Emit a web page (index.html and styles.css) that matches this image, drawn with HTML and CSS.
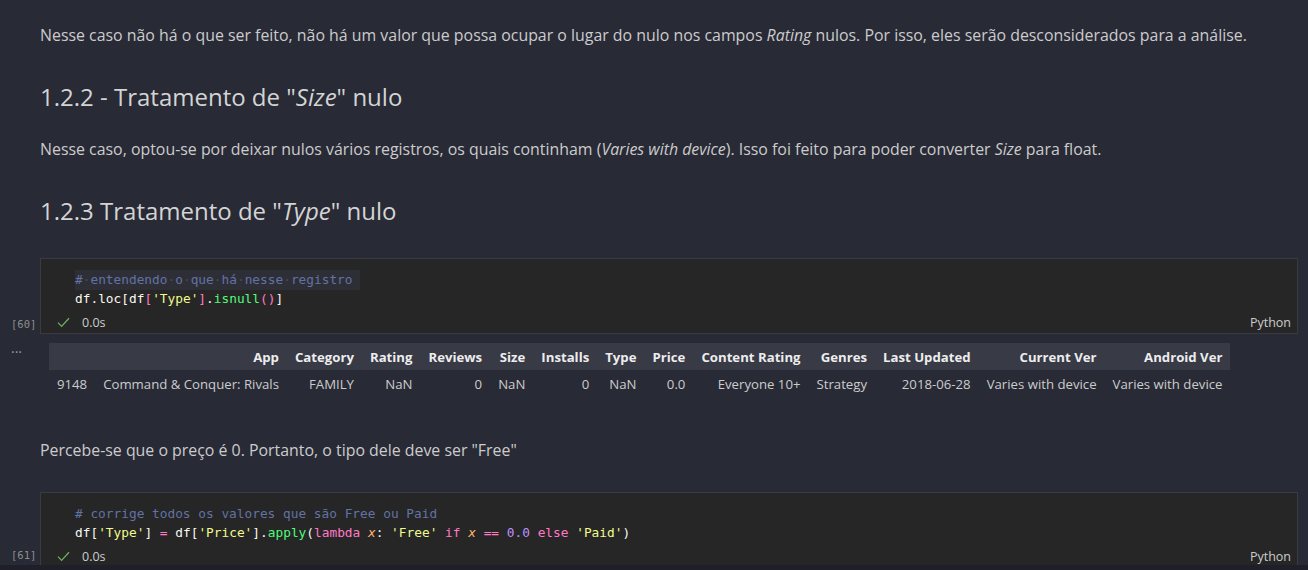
FILE: index.html
```html
<!DOCTYPE html>
<html lang="pt">
<head>
<meta charset="utf-8">
<title>Notebook</title>
<link rel="stylesheet" href="styles.css">
</head>
<body>
<div class="nb">
  <section class="md md-first">
    <p>Nesse caso não há o que ser feito, não há um valor que possa ocupar o lugar do nulo nos campos <em>Rating</em> nulos. Por isso, eles serão desconsiderados para a análise.</p>
  </section>
  <section class="md md-h2">
    <h2>1.2.2 - Tratamento de "<em>Size</em>" nulo</h2>
  </section>
  <section class="md md-p">
    <p>Nesse caso, optou-se por deixar nulos vários registros, os quais continham (<em>Varies with device</em>). Isso foi feito para poder converter <em>Size</em> para float.</p>
  </section>
  <section class="md md-h3">
    <h2>1.2.3 Tratamento de "<em>Type</em>" nulo</h2>
  </section>

  <section class="cell cell-1">
    <div class="cell-row">
      <div class="gutter"><span class="exec">[60]</span></div>
      <div class="cell-box">
        <pre class="code"><span class="line"><span class="hl"><span class="cm">#<span class="ws">·</span>entendendo<span class="ws">·</span>o<span class="ws">·</span>que<span class="ws">·</span>há<span class="ws">·</span>nesse<span class="ws">·</span>registro</span> </span></span>
<span class="line"><span class="id">df</span>.<span class="id">loc</span><span class="b1">[</span><span class="id">df</span><span class="b2">[</span><span class="str">'Type'</span><span class="b2">]</span>.<span class="fn">isnull</span><span class="b2">()</span><span class="b1">]</span></span></pre>
        <div class="status">
          <svg class="check" width="13" height="11" viewBox="0 0 13 11"><path d="M1 5.6 L4.6 9.4 L12 1.2" fill="none" stroke="#6fae5f" stroke-width="1.3"/></svg>
          <span class="time">0.0s</span>
          <span class="lang">Python</span>
        </div>
      </div>
    </div>
    <div class="out-row">
      <div class="gutter out-gutter"><span class="dots">···</span></div>
      <div class="output">
        <table class="df">
          <thead>
            <tr><th></th><th>App</th><th>Category</th><th>Rating</th><th>Reviews</th><th>Size</th><th>Installs</th><th>Type</th><th>Price</th><th>Content Rating</th><th>Genres</th><th>Last Updated</th><th>Current Ver</th><th>Android Ver</th></tr>
          </thead>
          <tbody>
            <tr><td>9148</td><td>Command &amp; Conquer: Rivals</td><td>FAMILY</td><td>NaN</td><td>0</td><td>NaN</td><td>0</td><td>NaN</td><td>0.0</td><td>Everyone 10+</td><td>Strategy</td><td>2018-06-28</td><td>Varies with device</td><td>Varies with device</td></tr>
          </tbody>
        </table>
      </div>
    </div>
  </section>

  <section class="md md-p2">
    <p>Percebe-se que o preço é 0. Portanto, o tipo dele deve ser "Free"</p>
  </section>

  <section class="cell cell-2">
    <div class="cell-row">
      <div class="gutter"><span class="exec">[61]</span></div>
      <div class="cell-box cell-box-open">
        <pre class="code"><span class="line"><span class="cm"># corrige todos os valores que são Free ou Paid</span></span>
<span class="line"><span class="id">df</span><span class="b1">[</span><span class="str">'Type'</span><span class="b1">]</span> <span class="kw">=</span> <span class="id">df</span><span class="b1">[</span><span class="str">'Price'</span><span class="b1">]</span>.<span class="fn">apply</span><span class="b1">(</span><span class="kw">lambda</span> <span class="param">x</span>: <span class="str">'Free'</span> <span class="kw">if</span> <span class="param">x</span> <span class="kw">==</span> <span class="num">0.0</span> <span class="kw">else</span> <span class="str">'Paid'</span><span class="b1">)</span></span></pre>
        <div class="status">
          <svg class="check" width="13" height="11" viewBox="0 0 13 11"><path d="M1 5.6 L4.6 9.4 L12 1.2" fill="none" stroke="#6fae5f" stroke-width="1.3"/></svg>
          <span class="time">0.0s</span>
          <span class="lang">Python</span>
        </div>
      </div>
    </div>
  </section>
  <div class="bottom-band"></div>
</div>
</body>
</html>
```

FILE: styles.css
```css
html, body {
  margin: 0;
  padding: 0;
}

body {
  background: #282a36;
  color: #cccccc;
  font-family: "Open Sans", "Noto Sans", "Liberation Sans", sans-serif;
  overflow: hidden;
  height: 570px;
}

.nb {
  display: flex;
  flex-direction: column;
}

/* ---------- markdown cells ---------- */
.md {
  padding-left: 40px;
  padding-right: 10px;
}

.md p {
  margin: 0;
  font-size: 15.9px;
  line-height: 22px;
}

.md h2 {
  margin: 0;
  font-size: 24px;
  line-height: 32px;
  font-weight: 400;
  color: #d4d4d4;
}

.md em {
  font-style: italic;
}

.md-first { margin-top: 24px; }
.md-h2 { margin-top: 35px; }
.md-p { margin-top: 25px; }
.md-h3 { margin-top: 35px; }
.md-p2 { margin-top: 41px; }

/* ---------- code cells ---------- */
.cell-1 { margin-top: 31px; }
.cell-2 { margin-top: 31px; }

.cell-row {
  display: flex;
}

.gutter {
  width: 40px;
  flex: none;
  position: relative;
}

.exec {
  position: absolute;
  left: 11px;
  bottom: 4px;
  font-family: "DejaVu Sans Mono", "Liberation Mono", monospace;
  font-size: 10.5px;
  color: #8e8e8e;
}

.cell-box {
  flex: 1;
  margin-right: 10px;
  background: #262626;
  border: 1px solid #393a44;
  display: flex;
  flex-direction: column;
}

.cell-box-open {
  border-bottom: none;
}

.code {
  margin: 0;
  padding: 11px 0 0 34px;
  font-family: "DejaVu Sans Mono", "Liberation Mono", monospace;
  font-size: 12.8px;
  line-height: 19px;
  color: #f8f8f2;
  white-space: pre;
}

.line {
  display: inline-block;
  height: 19px;
}

.hl {
  background: #2e2f36;
  display: inline-block;
  height: 20px;
}

.cm { color: #6272a4; }
.ws { color: #484b58; }
.id { color: #f8f8f2; }
.str { color: #f1fa8c; }
.fn { color: #50fa7b; }
.kw { color: #ff79c6; }
.num { color: #bd93f9; }
.param { color: #ffb86c; font-style: italic; }
.b1 { color: #f8f8f2; }
.b2 { color: #ff79c6; }

.status {
  display: flex;
  align-items: center;
  height: 21px;
  padding: 4px 6px 0 16px;
  font-size: 12.5px;
  color: #cccccc;
}

.check {
  display: block;
  margin-right: 12px;
}

.time {
  flex: 1;
}

.lang {
  color: #cccccc;
}

.cell-2 .status {
  height: 17px;
  padding-top: 6px;
}

/* ---------- output ---------- */
.out-row {
  display: flex;
  margin-top: 9px;
}

.out-gutter .dots {
  position: absolute;
  left: 11px;
  top: 2px;
  font-size: 14px;
  line-height: 14px;
  color: #9a9a9a;
}

.output {
  padding-left: 9px;
}

.df {
  border-collapse: collapse;
  font-size: 13.2px;
  color: #cccccc;
}

.df th {
  background: #383a46;
  color: #ededed;
  font-weight: 700;
  text-align: right;
  height: 27px;
  padding: 0 8px;
  white-space: nowrap;
}

.df td {
  text-align: right;
  height: 28px;
  padding: 0 8px;
  white-space: nowrap;
}

.bottom-band {
  height: 10px;
  background: #1e1f28;
}
```
